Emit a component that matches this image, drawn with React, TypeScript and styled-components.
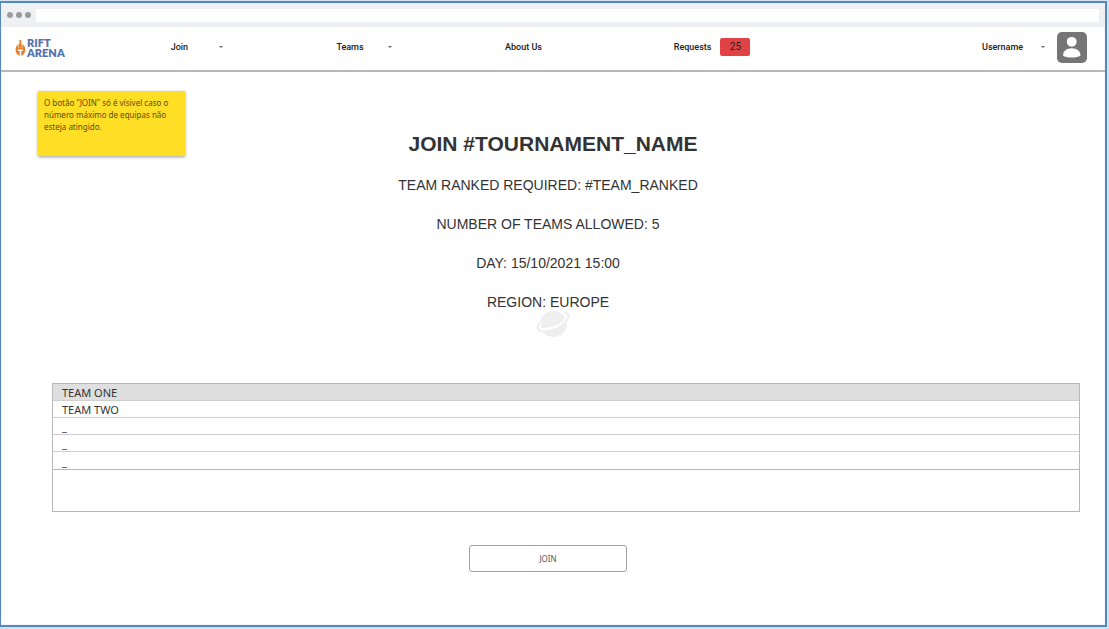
import React from "react";
import styled, { createGlobalStyle } from "styled-components";

const GlobalStyle = createGlobalStyle`
  *, *::before, *::after { box-sizing: border-box; }
  body {
    margin: 0;
    background: #d3e4f5;
    color: #333;
    font-family: "Liberation Sans", Arial, sans-serif;
  }
`;

const Frame = styled.div`
  display: flex;
  flex-direction: column;
  min-height: calc(100vh - 3px);
  margin: 1px 2px 2px 0;
  border: 2px solid #5788b6;
  border-left-width: 1px;
  background: #fff;
  box-shadow: inset 0 0 3px #d3ecfa;
`;

const BrowserBar = styled.div`
  display: flex;
  align-items: center;
  gap: 5px;
  height: 24px;
  padding: 0 6px;
  background: #eff0f4;
`;

const Dots = styled.div`
  display: flex;
  gap: 3px;
`;

const Dot = styled.span`
  width: 6px;
  height: 6px;
  border-radius: 50%;
  background: #9b9b9d;
`;

const AddressInput = styled.input`
  flex: 1;
  min-width: 0;
  height: 13px;
  padding: 0 4px;
  border: 0;
  background: #fff;
  font-size: 9px;
`;

const Nav = styled.nav`
  display: grid;
  grid-template-columns: 170fr 166fr 169fr 169fr 414fr;
  align-items: center;
  height: 45px;
  padding: 0 18px 3px 0;
  border-bottom: 2px solid #b8b8b8;
  font-family: Roboto, Arial, sans-serif;
  font-size: 9px;
  font-weight: 500;
`;

const LogoLink = styled.a`
  display: flex;
  align-items: center;
  gap: 1px;
  padding: 2px 0 0 14px;
  color: #5572b0;
  text-decoration: none;
`;

const LogoText = styled.span`
  display: flex;
  flex-direction: column;
  font-family: Lato, sans-serif;
  font-size: 11px;
  font-weight: 800;
  line-height: 10px;
`;

const NavItem = styled.div`
  display: flex;
  align-items: center;
`;

const NavLink = styled.a`
  color: #222;
  text-decoration: none;
`;

const MenuButton = styled.button<{ $width: number }>`
  display: flex;
  align-items: center;
  justify-content: space-between;
  width: ${(p) => p.$width}px;
  padding: 0;
  border: 0;
  background: none;
  color: #222;
  font: inherit;
`;

const Caret = styled.span`
  border: 2px solid transparent;
  border-top-color: #666;
  border-bottom: 0;
`;

const Badge = styled.span`
  width: 30px;
  margin-left: 9px;
  border-radius: 2px;
  background: #e14246;
  color: #222;
  font-size: 10px;
  font-weight: 400;
  line-height: 18px;
  text-align: center;
`;

const UserBarLayout = styled.div`
  display: flex;
  align-items: center;
  justify-content: space-between;
`;

const UserArea = styled.div`
  display: flex;
  align-items: center;
  justify-content: flex-end;
  gap: 12px;
`;

const Main = styled.main`
  position: relative;
  flex: 1;
  padding: 57px 25px 48px 51px;
`;

const Note = styled.aside`
  position: absolute;
  top: 19px;
  left: 37px;
  width: 147px;
  height: 65px;
  padding: 6px;
  background: #ffde26;
  box-shadow: 0 1px 3px rgba(0, 0, 0, 0.4);
  color: #5b4d0c;
  font-family: "Noto Sans", sans-serif;
  font-size: 8px;
  line-height: 12px;
`;

const Details = styled.section`
  display: flex;
  flex-direction: column;
  align-items: center;
  padding-right: 36px;
  text-align: center;
`;

const Title = styled.h1`
  margin: 0 0 7px;
  padding-left: 10px;
  font-size: 21px;
  line-height: 30px;
`;

const Detail = styled.p`
  margin: 0;
  font-size: 14px;
  line-height: 39px;
`;

const Planet = styled.svg`
  display: block;
  margin: -11px 0 46px 10px;
`;

const TeamTable = styled.table`
  width: 100%;
  border: 1px solid #b8b8b8;
  border-spacing: 0;
  font-family: "Noto Sans", sans-serif;
  font-size: 11px;
`;

const TeamRow = styled.tr<{ $selected?: boolean }>`
  background: ${(p) => (p.$selected ? "#dfdfdf" : "#fff")};

  &:last-child td {
    border-bottom: 0;
  }
`;

const TeamCell = styled.td<{ $open?: boolean }>`
  height: 17px;
  padding: ${(p) => (p.$open ? "3px 9px 1px" : "1px 9px 0")};
  border-bottom: 1px solid #cfcfcf;
  line-height: ${(p) => (p.$open ? "12px" : "15px")};
`;

const EmptyArea = styled.div`
  height: 42px;
  border: 1px solid #b8b8b8;
  border-top: 0;
`;

const Actions = styled.div`
  display: flex;
  justify-content: center;
  padding: 33px 36px 0 0;
`;

const JoinButton = styled.button`
  width: 158px;
  height: 27px;
  border: 1px solid #a0a0a0;
  border-radius: 3px;
  background: #fff;
  color: #555;
  font-family: "Noto Sans", sans-serif;
  font-size: 8px;
`;

const details = [
  "TEAM RANKED REQUIRED: #TEAM_RANKED",
  "NUMBER OF TEAMS ALLOWED: 5",
  "DAY: 15/10/2021 15:00",
  "REGION: EUROPE",
];

const teams = ["TEAM ONE", "TEAM TWO", "_", "_", "_"];

function LogoMark() {
  return (
    <svg width="11" height="18" viewBox="0 0 11 18" aria-hidden="true">
      <path d="M4.300 1h2v5h-2z" fill="#e58a3a" />
      <path d="M4.300 5C1.600 6 .5 8 .6 11c.2 3 1.500 5 4.100 6v-5H2.900v-1.400h5V12H6.200v5c2.500-1 3.900-3 4.100-6 .1-3-1-5-3.800-6z" fill="#e5812f" />
      <path d="M3.600 5.500v3.500M7.100 5.500v3.500" stroke="#fff" strokeWidth=".5" />
    </svg>
  );
}

function Avatar() {
  return (
    <svg width="30" height="31" viewBox="0 0 30 31" role="img" aria-label="User">
      <rect width="30" height="31" rx="5" fill="#757575" />
      <circle cx="14.700" cy="9.800" r="4.900" fill="#fff" />
      <path d="M6 23.500c0-4.500 3.800-7.300 8.700-7.300s8.800 2.800 8.800 7.300c-1.800 1.400-5 2-8.800 2s-7-.6-8.700-2z" fill="#fff" />
    </svg>
  );
}

function PlanetMark() {
  return (
    <Planet width="34" height="26" viewBox="0 0 34 26" aria-hidden="true">
      <ellipse cx="17.500" cy="13" rx="13.500" ry="13" fill="#efefef" />
      <path
        d="M29 2c3.500-.5 4 2 2 5.500C28 14 18 19 8.500 19c-5.500 0-7-3-4-7.500"
        fill="none"
        stroke="#fff"
        strokeWidth="4"
      />
      <path
        d="M28.500 2c4-.7 5 2 3 6C28 15 18 20.500 8 20.500c-6.500 0-8-3.500-4-9"
        fill="none"
        stroke="#ededed"
        strokeWidth="2"
      />
    </Planet>
  );
}

function NavMenu({ label, width }: { label: string; width: number }) {
  return (
    <MenuButton type="button" $width={width}>
      {label}
      <Caret />
    </MenuButton>
  );
}

function UserBar() {
  return (
    <UserBarLayout>
      <NavItem>
        <NavLink href="#requests">Requests</NavLink>
        <Badge>25</Badge>
      </NavItem>
      <UserArea>
        <NavMenu label="Username" width={63} />
        <Avatar />
      </UserArea>
    </UserBarLayout>
  );
}

export default function App() {
  return (
    <>
      <GlobalStyle />
      <Frame>
        <BrowserBar>
          <Dots>
            <Dot />
            <Dot />
            <Dot />
          </Dots>
          <AddressInput type="text" aria-label="Address" />
        </BrowserBar>
        <Nav>
          <LogoLink href="#home">
            <LogoMark />
            <LogoText>
              <span>RIFT</span>
              <span>ARENA</span>
            </LogoText>
          </LogoLink>
          <NavItem>
            <NavMenu label="Join" width={52} />
          </NavItem>
          <NavItem>
            <NavMenu label="Teams" width={56} />
          </NavItem>
          <NavItem>
            <NavLink href="#about">About Us</NavLink>
          </NavItem>
          <UserBar />
        </Nav>
        <Main>
          <Note>O botão "JOIN" só é vísivel caso o número máximo de equipas não esteja atingido.</Note>
          <Details>
            <Title>JOIN #TOURNAMENT_NAME</Title>
            {details.map((line) => (
              <Detail key={line}>{line}</Detail>
            ))}
            <PlanetMark />
          </Details>
          <TeamTable aria-label="Teams">
            <tbody>
              {teams.map((team, i) => (
                <TeamRow key={i} $selected={i === 0}>
                  <TeamCell $open={team === "_"}>{team}</TeamCell>
                </TeamRow>
              ))}
            </tbody>
          </TeamTable>
          <EmptyArea />
          <Actions>
            <JoinButton type="button">JOIN</JoinButton>
          </Actions>
        </Main>
      </Frame>
    </>
  );
}
